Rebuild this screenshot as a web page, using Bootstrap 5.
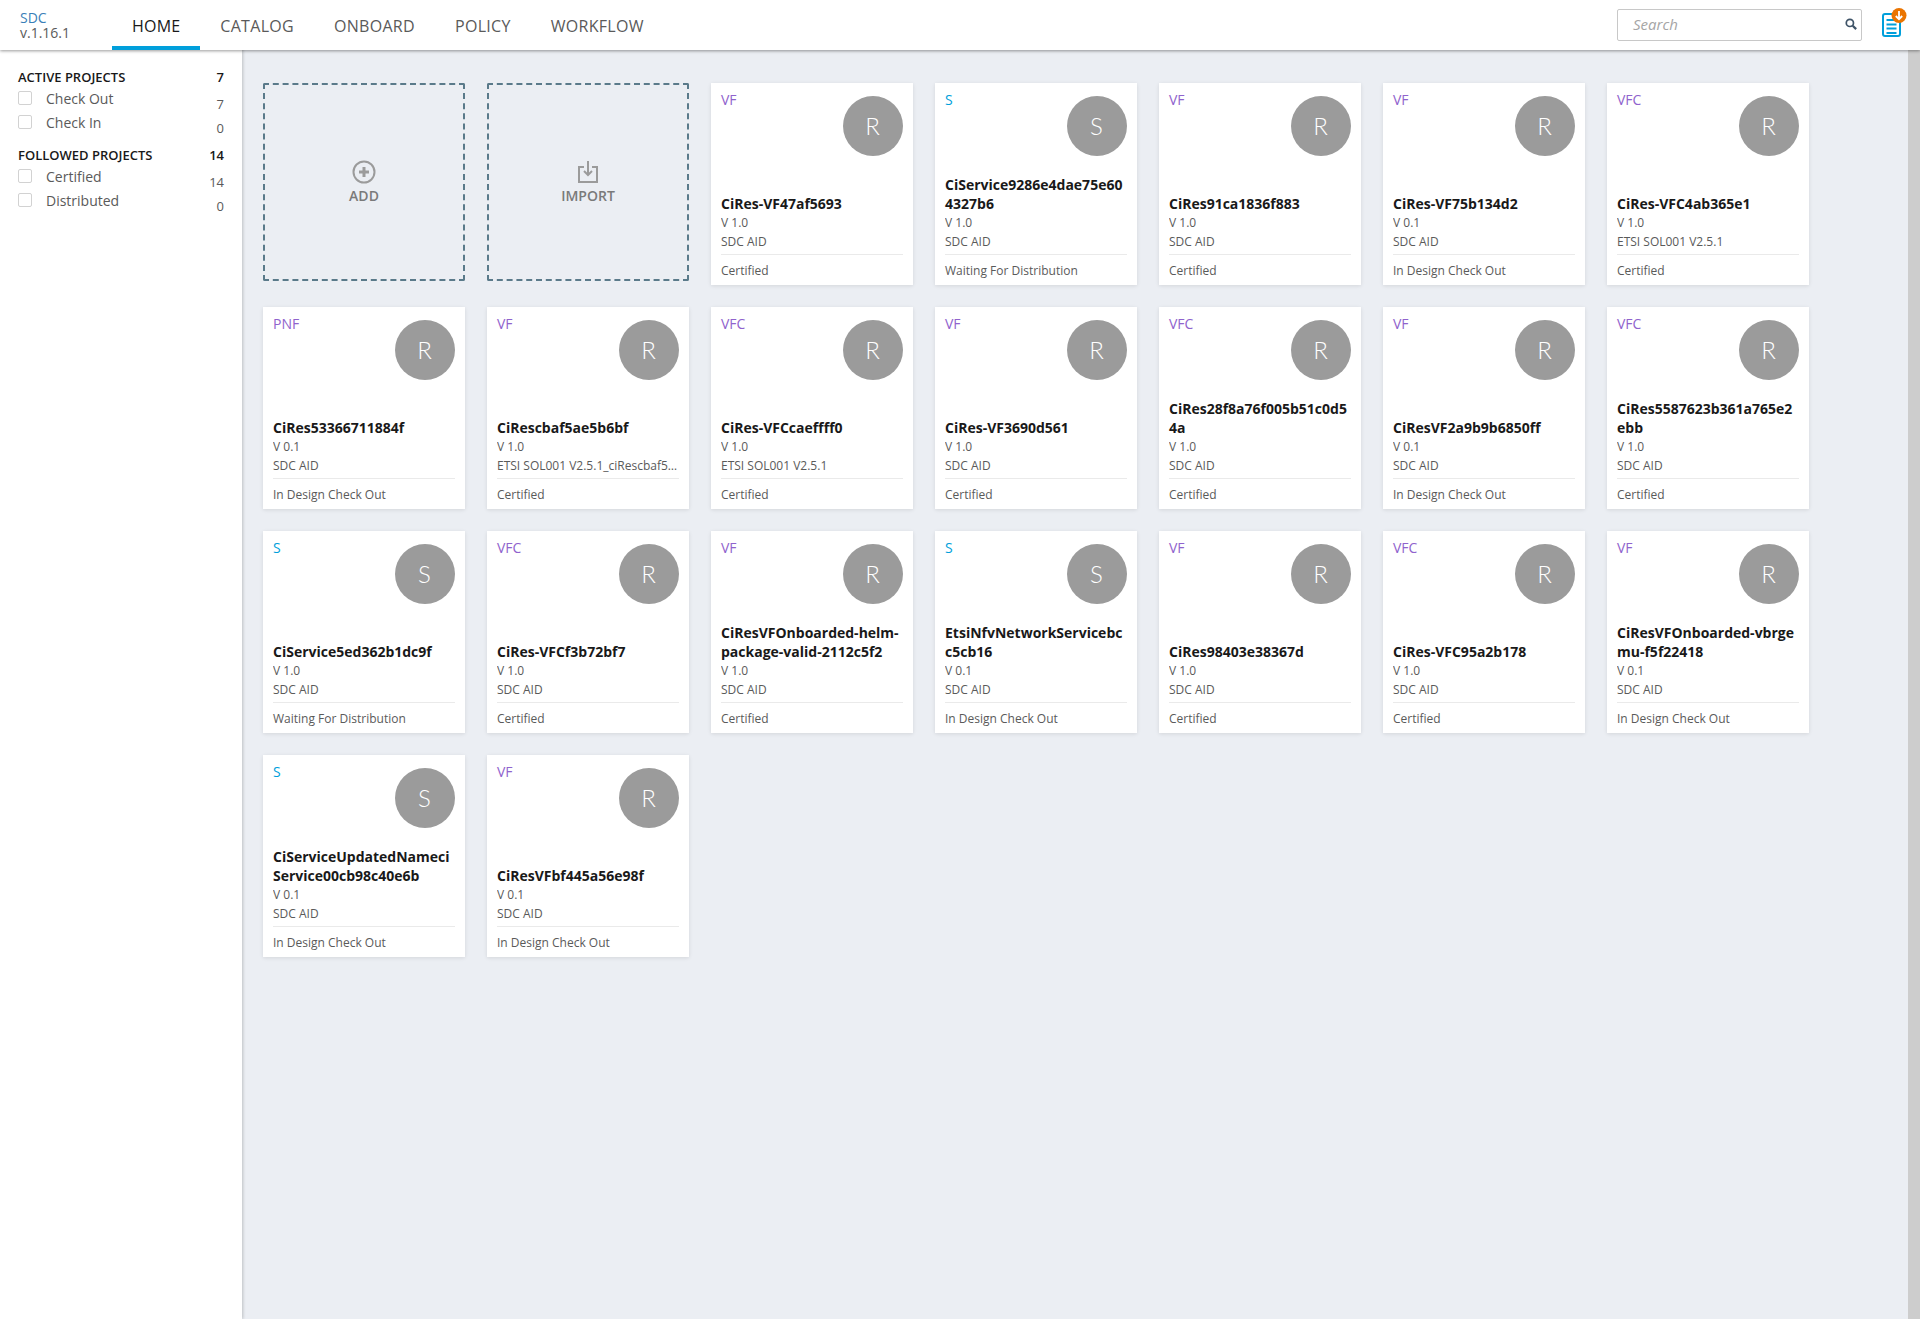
<!DOCTYPE html>
<html lang="en">
  <head>
    <meta charset="UTF-8" />
    <meta name="viewport" content="width=device-width, initial-scale=1.0" />
    <title>SDC</title>
    <link
      href="https://cdn.jsdelivr.net/npm/bootstrap@5.3.0/dist/css/bootstrap.min.css"
      rel="stylesheet"
    />
    <style>
      html, body { height: 100%; }
      body { font-family: "Open Sans", sans-serif; background: #ebeef3; color: #5a5a5a; overflow: hidden; }
      .app-wrap { height: 1319px; padding-right: 12px; background: #ebeef3; position: relative; }
      .fake-scroll { position: absolute; top: 50px; right: 0; bottom: 0; width: 12px; background: #cdcdcd; }
      .top-bar { height: 50px; background: #fff; box-shadow: 0 1px 3px rgba(0,0,0,.4); position: absolute; left: 0; right: 0; top: 0; z-index: 5; }
      .brand-box { width: 112px; padding: 10px 0 0 20px; font-size: 14px; line-height: 15px; color: #5a5a5a; }
      .brand-box div:first-child { color: #3a7fb8; }
      .nav-item-x { height: 50px; line-height: 52px; font-size: 16px; letter-spacing: .3px; color: #5a5a5a; padding: 0 20px; text-decoration: none; }
      .nav-item-x.is-on { color: #191919; letter-spacing: .2px; border-bottom: 4px solid #009fdb; }
      .search-box { width: 245px; height: 32px; margin-top: 9px; margin-right: 20px; border: 1px solid #c8c8c8; border-radius: 2px; padding: 0 4px 2px 15px; }
      .search-box span { font-size: 15px; font-style: italic; color: #a5a5a5; }
      .note-icon { position: relative; width: 26px; height: 30px; margin: 8px 12px 0 0; }
      .side-bar { width: 242px; flex: none; background: #fff; box-shadow: 1px 0 3px rgba(0,0,0,.2); padding: 68px 18px 0 18px; }
      .side-head { font-size: 13px; font-weight: 600; color: #191919; line-height: 18px; }
      .side-row { font-size: 14px; height: 24px; line-height: 20px; }
      .side-row i { display: inline-block; width: 14px; height: 14px; border: 1px solid #d2d2d2; border-radius: 2px; margin-right: 7px; }
      .side-row .cnt { font-size: 13px; line-height: 20px; padding-top: 8px; }
      .side-name { margin-left: 7px; padding-top: 1px; }
      .side-gap { margin-top: 12px; }
      .main-area { padding: 83px 0 0 21px; align-content: flex-start; gap: 22px; }
      .tile { width: 202px; height: 202px; background: #fff; box-shadow: 0 1px 4px rgba(0,0,0,.1); padding: 8px 10px 4px; position: relative; font-size: 12px; line-height: 19px; }
      .add-tile { width: 202px; height: 198px; margin-bottom: 4px; border: 2px dashed #5a7a8a; border-radius: 2px; color: #7a7a7a; font-size: 14px; font-weight: 600; padding-top: 75px; }
      .add-tile div { margin-top: 1px; }
      .kind { font-size: 14px; line-height: 18px; }
      .kind-r { color: #9063cd; }
      .kind-s { color: #009fdb; }
      .round-icon { position: absolute; top: 13px; right: 10px; width: 60px; height: 60px; padding: 0 1px 2px 0; border-radius: 50%; background: #9b9b9b; color: #fff; font-family: "Lato", sans-serif; font-size: 24px; font-weight: 300; }
      .tile-name { font-size: 14px; font-weight: 700; color: #191919; line-height: 19px; word-break: break-all; }
      .tile-ver { line-height: 18px; margin-top: 1px; }
      .tile-sub { white-space: nowrap; overflow: hidden; text-overflow: ellipsis; }
      .tile-state { border-top: 1px solid #eaeaea; margin-top: 3px; padding-top: 6px; line-height: 20px; }
    </style>
  </head>
  <body>
    <div class="app-wrap">
      <div class="top-bar d-flex">
        <div class="brand-box"><div>SDC</div><div>v.1.16.1</div></div>
        <a class="nav-item-x is-on" href="#">HOME</a>
        <a class="nav-item-x" href="#">CATALOG</a>
        <a class="nav-item-x" href="#">ONBOARD</a>
        <a class="nav-item-x" href="#">POLICY</a>
        <a class="nav-item-x" href="#">WORKFLOW</a>
        <div class="search-box d-flex align-items-center justify-content-between ms-auto">
          <span>Search</span>
          <svg width="12" height="12" viewBox="0 0 14 14" fill="none" stroke="#3f5468" stroke-width="2"><circle cx="5.7" cy="5.7" r="4.2"/><path d="M9 9l4 4" stroke-width="2.6"/></svg>
        </div>
        <div class="note-icon">
          <svg width="26" height="30" viewBox="0 0 26 30" fill="none">
            <rect x="1" y="6" width="17" height="22" rx="2" stroke="#009fdb" stroke-width="2"/>
            <path d="M4.500 12h10M4.500 16.500h10M4.500 20.500h10M4.500 25h10" stroke="#009fdb" stroke-width="2"/>
            <circle cx="17" cy="7.500" r="7.500" fill="#ea7400"/>
            <path d="M17 3v8M13.800 8l3.200 3.200 3.200-3.200" stroke="#fff" stroke-width="1.800"/>
          </svg>
        </div>
      </div>
      <div class="d-flex h-100">
        <div class="side-bar">
          <div class="side-head d-flex justify-content-between"><span>ACTIVE PROJECTS</span><span>7</span></div>
          <div class="side-row d-flex justify-content-between"><span class="d-flex align-items-center"><i></i><span class="side-name">Check Out</span></span><span class="cnt">7</span></div>
          <div class="side-row d-flex justify-content-between"><span class="d-flex align-items-center"><i></i><span class="side-name">Check In</span></span><span class="cnt">0</span></div>
          <div class="side-head side-gap d-flex justify-content-between"><span>FOLLOWED PROJECTS</span><span>14</span></div>
          <div class="side-row d-flex justify-content-between"><span class="d-flex align-items-center"><i></i><span class="side-name">Certified</span></span><span class="cnt">14</span></div>
          <div class="side-row d-flex justify-content-between"><span class="d-flex align-items-center"><i></i><span class="side-name">Distributed</span></span><span class="cnt">0</span></div>
        </div>
        <div class="main-area d-flex flex-wrap flex-grow-1" id="tile-list">
          <div class="add-tile text-center">
            <svg class="d-block mx-auto" width="24" height="24" viewBox="0 0 24 24" fill="none" stroke="#9b9b9b"><circle cx="12" cy="12" r="10.500" stroke-width="2"/><path d="M12 7v10M7 12h10" stroke-width="3"/></svg>
            <div>ADD</div>
          </div>
          <div class="add-tile text-center">
            <svg class="d-block mx-auto" width="24" height="24" viewBox="0 0 24 24" fill="none" stroke="#9b9b9b" stroke-width="2"><path d="M8 7H3v15h18V7h-5"/><path d="M12 1v14M8 11l4 4 4-4"/></svg>
            <div>IMPORT</div>
          </div>
        </div>
      </div>
      <div class="fake-scroll"></div>
    </div>

    <script src="https://cdn.jsdelivr.net/npm/bootstrap@5.3.0/dist/js/bootstrap.bundle.min.js"></script>
    <script>
      const tiles = [
        ["VF", "CiRes-VF47af5693", "V 1.0", "SDC AID", "Certified"],
        ["S", "CiService9286e4dae75e604327b6", "V 1.0", "SDC AID", "Waiting For Distribution"],
        ["VF", "CiRes91ca1836f883", "V 1.0", "SDC AID", "Certified"],
        ["VF", "CiRes-VF75b134d2", "V 0.1", "SDC AID", "In Design Check Out"],
        ["VFC", "CiRes-VFC4ab365e1", "V 1.0", "ETSI SOL001 V2.5.1", "Certified"],
        ["PNF", "CiRes53366711884f", "V 0.1", "SDC AID", "In Design Check Out"],
        ["VF", "CiRescbaf5ae5b6bf", "V 1.0", "ETSI SOL001 V2.5.1_ciRescbaf5ae5b6bf", "Certified"],
        ["VFC", "CiRes-VFCcaeffff0", "V 1.0", "ETSI SOL001 V2.5.1", "Certified"],
        ["VF", "CiRes-VF3690d561", "V 1.0", "SDC AID", "Certified"],
        ["VFC", "CiRes28f8a76f005b51c0d54a", "V 1.0", "SDC AID", "Certified"],
        ["VF", "CiResVF2a9b9b6850ff", "V 0.1", "SDC AID", "In Design Check Out"],
        ["VFC", "CiRes5587623b361a765e2ebb", "V 1.0", "SDC AID", "Certified"],
        ["S", "CiService5ed362b1dc9f", "V 1.0", "SDC AID", "Waiting For Distribution"],
        ["VFC", "CiRes-VFCf3b72bf7", "V 1.0", "SDC AID", "Certified"],
        ["VF", "CiResVFOnboarded-helm-package-valid-2112c5f2", "V 1.0", "SDC AID", "Certified"],
        ["S", "EtsiNfvNetworkServicebcc5cb16", "V 0.1", "SDC AID", "In Design Check Out"],
        ["VF", "CiRes98403e38367d", "V 1.0", "SDC AID", "Certified"],
        ["VFC", "CiRes-VFC95a2b178", "V 1.0", "SDC AID", "Certified"],
        ["VF", "CiResVFOnboarded-vbrgemu-f5f22418", "V 0.1", "SDC AID", "In Design Check Out"],
        ["S", "CiServiceUpdatedNameciService00cb98c40e6b", "V 0.1", "SDC AID", "In Design Check Out"],
        ["VF", "CiResVFbf445a56e98f", "V 0.1", "SDC AID", "In Design Check Out"],
      ];

      const list = document.getElementById("tile-list");
      tiles.forEach((t) => {
        const isService = t[0] === "S";
        const el = document.createElement("div");
        el.className = "tile d-flex flex-column";
        el.innerHTML = `
          <div class="kind ${isService ? "kind-s" : "kind-r"}">${t[0]}</div>
          <div class="round-icon d-flex align-items-center justify-content-center">${isService ? "S" : "R"}</div>
          <div class="tile-name mt-auto">${t[1]}</div>
          <div class="tile-sub tile-ver">${t[2]}</div>
          <div class="tile-sub">${t[3]}</div>
          <div class="tile-state">${t[4]}</div>
        `;
        list.appendChild(el);
      });
    </script>
  </body>
</html>
